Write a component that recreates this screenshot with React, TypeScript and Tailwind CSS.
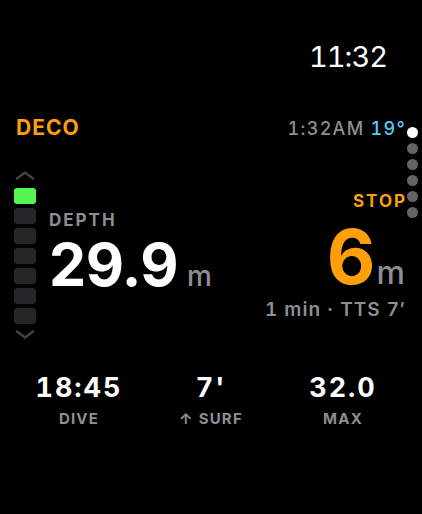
const gauge = [true, false, false, false, false, false, false]
const dots = [true, false, false, false, false, false]

const stats = [
  { value: '18:45', label: 'DIVE' },
  { value: "7'", label: '↑ SURF' },
  { value: '32.0', label: 'MAX' },
]

function Chevron({ down }: { down?: boolean }) {
  return (
    <svg width="22" height="9" viewBox="0 0 22 9" fill="none">
      <polyline
        points={down ? '3,1.5 11,7.5 19,1.5' : '3,7.5 11,1.5 19,7.5'}
        stroke="#404042"
        strokeWidth="2.8"
        strokeLinecap="round"
        strokeLinejoin="round"
      />
    </svg>
  )
}

export default function App() {
  return (
    <div className="w-[422px] h-[514px] bg-black text-white font-['Inter','Noto_Sans',sans-serif] pt-[42px] overflow-hidden">
      {/* clock */}
      <div className="flex justify-end pr-[35px]">
        <span className="text-[29px] leading-none font-normal tabular-nums tracking-[-1px]">11:32</span>
      </div>

      <div className="flex mt-[46px]">
        <div className="flex-1 pl-[14px] pr-[1px]">
          {/* header */}
          <div className="flex justify-between items-baseline">
            <span className="ml-[2px] text-[21px] leading-none font-bold text-[#ff9f0a] tracking-[1px]">DECO</span>
            <span className="mr-[-1px] text-[18px] leading-none font-medium tabular-nums tracking-[1.3px]">
              <span className="text-[#8e8e93]">1:32AM</span>{' '}
              <span className="text-[#5ac8fa]">19°</span>
            </span>
          </div>

          {/* body */}
          <div className="flex items-start">
            <div className="flex flex-col items-center w-[22px] mt-[33px]">
              <Chevron />
              <div className="flex flex-col gap-[4px] mt-[8px]">
                {gauge.map((on, i) => (
                  <div
                    key={i}
                    className={on ? 'w-[22px] h-[16px] rounded-[3px] bg-[#52f552]' : 'w-[22px] h-[16px] rounded-[3px] bg-[#262628]'}
                  />
                ))}
              </div>
              <div className="mt-[6px]">
                <Chevron down />
              </div>
            </div>

            <div className="ml-[13px] mt-[74px]">
              <div className="text-[17px] leading-none font-bold text-[#8e8e93] tracking-[2px]">DEPTH</div>
              <div className="flex items-baseline mt-[6px]">
                <span className="text-[59px] leading-none font-bold tracking-[-0.5px]">29.9</span>
                <span className="ml-[9px] text-[28px] leading-none font-medium text-[#8e8e93]">m</span>
              </div>
            </div>

            <div className="flex-1 flex flex-col items-end mt-[55px]">
              <div className="mr-[-2px] text-[17px] leading-none font-bold text-[#ff9f0a] tracking-[2px]">STOP</div>
              <div className="flex items-baseline mt-[9px]">
                <span className="text-[75px] leading-none font-bold text-[#ff9f0a] tracking-[-2px]">6</span>
                <span className="ml-[3px] text-[32px] leading-none font-medium text-[#8e8e93]">m</span>
              </div>
              <div className="mt-[6px] mr-[-1px] text-[19px] leading-none font-semibold text-[#8e8e93] tabular-nums tracking-[1px]">
                1 min · TTS 7′
              </div>
            </div>
          </div>
        </div>

        {/* page dots */}
        <div className="flex flex-col gap-[5px] pt-[10px] ml-[1px] mr-[4px]">
          {dots.map((on, i) => (
            <div key={i} className={on ? 'w-[11px] h-[11px] rounded-full bg-white' : 'w-[11px] h-[11px] rounded-full bg-[#636366]'} />
          ))}
        </div>
      </div>

      {/* stats */}
      <div className="grid grid-cols-3 px-[13px] mt-[35px]">
        {stats.map((s) => (
          <div key={s.label} className="flex flex-col items-center">
            <span className="text-[27px] leading-none font-bold tabular-nums tracking-[2px]">{s.value}</span>
            <span className="mt-[10px] text-[15px] leading-none font-bold text-[#8e8e93] tracking-[1.2px]">{s.label}</span>
          </div>
        ))}
      </div>
    </div>
  )
}
